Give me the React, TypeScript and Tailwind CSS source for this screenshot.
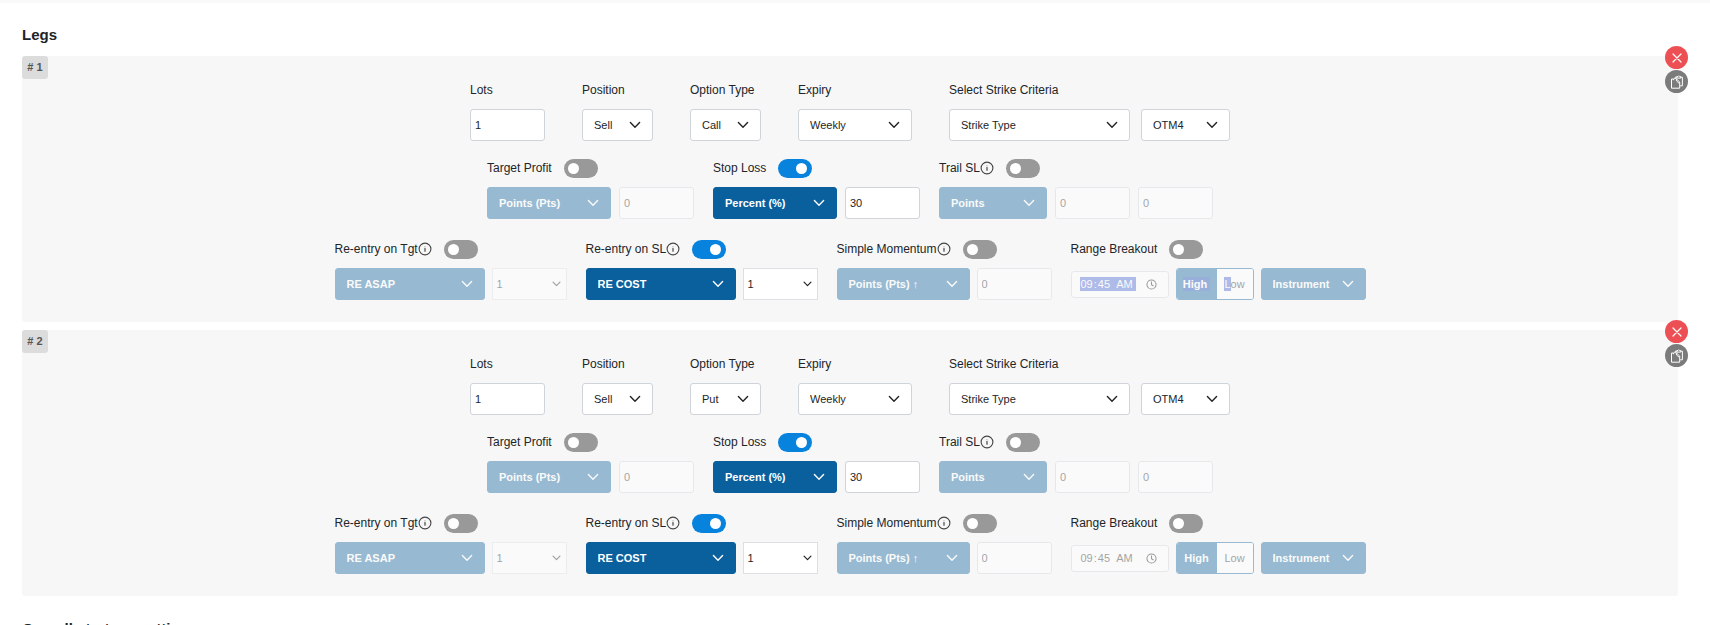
import { useId, useState } from "react";
import type { ReactNode } from "react";

type Toggles = {
  target: boolean;
  stopLoss: boolean;
  trail: boolean;
  reTarget: boolean;
  reStop: boolean;
  momentum: boolean;
  range: boolean;
};

function Chevron({ small = false }: { small?: boolean }) {
  return (
    <svg
      viewBox="0 0 12 8"
      className={small ? "h-[6px] w-[9px]" : "h-[8px] w-[12px]"}
      fill="none"
      stroke="currentColor"
      strokeWidth={small ? 1.6 : 1.4}
      strokeLinecap="round"
      strokeLinejoin="round"
      aria-hidden="true"
    >
      <path d="M1.4 1.6 6 6.2l4.6-4.6" />
    </svg>
  );
}

function InfoIcon() {
  return (
    <svg viewBox="0 0 14 14" className="size-[14px] shrink-0 text-[#444]" fill="none" stroke="currentColor" aria-hidden="true">
      <circle cx="7" cy="7" r="5.9" strokeWidth="1.1" />
      <path d="M7 6.5v2.7" strokeWidth="1.2" strokeLinecap="round" />
      <circle cx="7" cy="4.9" r="0.2" strokeWidth="0.5" />
    </svg>
  );
}

type SelectProps = {
  label: string;
  options: string[];
  width: string;
  id?: string;
  tone?: "plain" | "primary" | "compact";
  disabled?: boolean;
};

const selectTones = {
  plain: "rounded-[3px] border border-[#ced4da] bg-white pl-[11px] text-[#212529]",
  primary: "rounded-[3px] border border-[#0a609d] bg-[#0a609d] pl-[11px] font-bold text-white",
  compact: "border border-[#dcdfe3] bg-white pl-[4px] text-[#212529]",
};

const chevronTones = {
  plain: "mr-[12px] text-[#222]",
  primary: "mr-[12px] text-white",
  compact: "mr-[6px] text-[#222]",
};

function Select({ label, options, width, id, tone = "plain", disabled = false }: SelectProps) {
  return (
    <div className={`grid h-8 items-center ${width} ${disabled ? "opacity-40" : ""}`}>
      <select
        id={id}
        aria-label={id ? undefined : label}
        disabled={disabled}
        className={`col-start-1 row-start-1 h-8 w-full appearance-none text-[11px] opacity-100 ${selectTones[tone]}`}
      >
        {options.map((o) => (
          <option key={o}>{o}</option>
        ))}
      </select>
      <span className={`pointer-events-none col-start-1 row-start-1 justify-self-end ${chevronTones[tone]}`}>
        <Chevron small={tone === "compact"} />
      </span>
    </div>
  );
}

function NumberBox({ label, value, id, disabled = false }: { label: string; value: string; id?: string; disabled?: boolean }) {
  return (
    <input
      id={id}
      aria-label={id ? undefined : label}
      type="text"
      inputMode="numeric"
      defaultValue={value}
      disabled={disabled}
      className="h-8 w-[75px] rounded-[3px] border border-[#ced4da] bg-white px-[4px] text-[11px] text-[#212529] disabled:opacity-40"
    />
  );
}

function Field({ label, children }: { label: string; children: (id: string) => ReactNode }) {
  const id = useId();
  return (
    <div className="flex flex-col gap-[9px]">
      <label htmlFor={id} className="text-[12px] leading-5">
        {label}
      </label>
      <div className="flex gap-[11px]">{children(id)}</div>
    </div>
  );
}

type GroupProps = {
  label: string;
  info?: boolean;
  wide?: boolean;
  on: boolean;
  onToggle: () => void;
  children: ReactNode;
};

function ToggleGroup({ label, info = false, wide = false, on, onToggle, children }: GroupProps) {
  return (
    <div className="flex flex-col gap-[9px]">
      <label className="flex h-5 items-center gap-3 text-[12px] leading-5">
        <span className="flex items-center">
          {label}
          {info && <InfoIcon />}
        </span>
        <input
          type="checkbox"
          role="switch"
          checked={on}
          onChange={onToggle}
          className="h-[19px] w-[34px] appearance-none rounded-full bg-[#999] before:m-[4px] before:block before:size-[11px] before:rounded-full before:bg-white checked:bg-[#0783dd] checked:before:ml-[18px]"
        />
      </label>
      <div className={`flex items-center ${wide ? "gap-[8px]" : "gap-[7px]"}`}>{children}</div>
    </div>
  );
}

const timeHighlight =
  "[&::-webkit-datetime-edit-hour-field]:bg-[#4361d1] [&::-webkit-datetime-edit-minute-field]:bg-[#4361d1] [&::-webkit-datetime-edit-ampm-field]:bg-[#4361d1] [&::-webkit-datetime-edit-text]:bg-[#4361d1] [&::-webkit-datetime-edit-hour-field]:text-white [&::-webkit-datetime-edit-minute-field]:text-white [&::-webkit-datetime-edit-ampm-field]:text-white [&::-webkit-datetime-edit-text]:text-white";

const timePlain =
  "[&::-webkit-datetime-edit-hour-field]:text-[#212529] [&::-webkit-datetime-edit-minute-field]:text-[#212529] [&::-webkit-datetime-edit-ampm-field]:text-[#212529]";

function TimeBox({ disabled, highlighted }: { disabled: boolean; highlighted: boolean }) {
  return (
    <div
      className={`flex h-[27px] w-[98px] items-center justify-between rounded-[3px] border border-[#ced4da] bg-white pl-[8px] pr-[11px] ${disabled ? "opacity-40" : ""}`}
    >
      <input
        type="time"
        aria-label="Range breakout time"
        defaultValue="09:45"
        disabled={disabled}
        className={`h-[17px] w-[62px] text-[11px] text-[#212529] [&::-webkit-calendar-picker-indicator]:hidden [&::-webkit-datetime-edit]:p-0 [&::-webkit-datetime-edit-fields-wrapper]:p-0 [&::-webkit-datetime-edit-hour-field]:p-px [&::-webkit-datetime-edit-minute-field]:p-px [&::-webkit-datetime-edit-text]:py-px [&::-webkit-datetime-edit-ampm-field]:px-[3px] [&::-webkit-datetime-edit-ampm-field]:py-px ${highlighted ? timeHighlight : timePlain}`}
      />
      <svg viewBox="0 0 12 12" className="size-[11px] shrink-0" fill="none" stroke="#111" strokeWidth="1.1" aria-hidden="true">
        <circle cx="6" cy="6" r="5" />
        <path d="M6 2.8v3.4l2.2 1.4" />
      </svg>
    </div>
  );
}

function Leg({ index, optionType, highlighted = false }: { index: number; optionType: string; highlighted?: boolean }) {
  const [on, setOn] = useState<Toggles>({
    target: false,
    stopLoss: true,
    trail: false,
    reTarget: false,
    reStop: true,
    momentum: false,
    range: false,
  });
  const group = (key: keyof Toggles) => ({
    on: on[key],
    onToggle: () => setOn((prev) => ({ ...prev, [key]: !prev[key] })),
  });

  return (
    <section aria-label={`Leg ${index}`} className="relative rounded-[3px] bg-[#f7f7f7] pt-6 pb-[22px]">
      <span className="absolute top-0 left-0 w-[26px] rounded-[3px] bg-[#dcdcdc] text-center text-[11px] leading-[23px] font-bold text-[#555]">
        # {index}
      </span>
      <div className="absolute -top-[10px] -right-[10px] flex flex-col gap-px">
        <button type="button" aria-label="Remove leg" className="grid size-[23px] place-items-center rounded-full bg-[#ed5054]">
          <svg viewBox="0 0 10 10" className="size-[10px]" stroke="#fff" strokeWidth="1.2" strokeLinecap="round" aria-hidden="true">
            <path d="M1 1l8 8M9 1 1 9" />
          </svg>
        </button>
        <button type="button" aria-label="Copy leg" className="grid size-[23px] place-items-center rounded-full bg-[#7b7b7b]">
          <svg viewBox="0 0 14 14" className="size-[14px]" fill="none" stroke="#fff" strokeWidth="1" strokeLinejoin="round" aria-hidden="true">
            <path d="M5.2 3.6V2.2h1.6M10.8 2.2h1.6v8.6H10.2" />
            <path d="M6.8 3.1V1.6h1.2l.8-.9.8.9h1.2v1.5z" />
            <path d="M3.4 4H1.5v9.2h8.2V7" />
            <path d="M3.4 5.2V4h1l1-1 1 1 3.3 3" />
            <path d="M6.4 4v1.8L9 8.2" />
          </svg>
        </button>
      </div>

      <div className="flex justify-center gap-[37px]">
        <Field label="Lots">{(id) => <NumberBox id={id} label="Lots" value="1" />}</Field>
        <Field label="Position">{(id) => <Select id={id} label="Position" options={["Sell", "Buy"]} width="w-[71px]" />}</Field>
        <Field label="Option Type">
          {(id) => (
            <Select id={id} label="Option Type" options={optionType === "Call" ? ["Call", "Put"] : ["Put", "Call"]} width="w-[71px]" />
          )}
        </Field>
        <Field label="Expiry">{(id) => <Select id={id} label="Expiry" options={["Weekly", "Monthly"]} width="w-[114px]" />}</Field>
        <Field label="Select Strike Criteria">
          {(id) => (
            <>
              <Select id={id} label="Strike criteria" options={["Strike Type", "Premium"]} width="w-[181px]" />
              <Select label="Strike" options={["OTM4", "ATM"]} width="w-[89px]" />
            </>
          )}
        </Field>
      </div>

      <div className="mt-[17px] flex justify-center gap-[19px]">
        <ToggleGroup label="Target Profit" wide {...group("target")}>
          <Select tone="primary" label="Target unit" options={["Points (Pts)", "Percent (%)"]} width="w-[124px]" disabled={!on.target} />
          <NumberBox label="Target value" value="0" disabled={!on.target} />
        </ToggleGroup>
        <ToggleGroup label="Stop Loss" wide {...group("stopLoss")}>
          <Select tone="primary" label="Stop loss unit" options={["Percent (%)", "Points (Pts)"]} width="w-[124px]" disabled={!on.stopLoss} />
          <NumberBox label="Stop loss value" value="30" disabled={!on.stopLoss} />
        </ToggleGroup>
        <ToggleGroup label="Trail SL" wide info {...group("trail")}>
          <Select tone="primary" label="Trail unit" options={["Points", "Percent"]} width="w-[108px]" disabled={!on.trail} />
          <NumberBox label="Trail step" value="0" disabled={!on.trail} />
          <NumberBox label="Trail amount" value="0" disabled={!on.trail} />
        </ToggleGroup>
      </div>

      <div className="mt-5 flex justify-center gap-[19px]">
        <ToggleGroup label="Re-entry on Tgt" info {...group("reTarget")}>
          <Select tone="primary" label="Target re-entry mode" options={["RE ASAP", "RE COST"]} width="w-[150px]" disabled={!on.reTarget} />
          <Select tone="compact" label="Target re-entries" options={["1", "2", "3"]} width="w-[75px]" disabled={!on.reTarget} />
        </ToggleGroup>
        <ToggleGroup label="Re-entry on SL" info {...group("reStop")}>
          <Select tone="primary" label="Stop loss re-entry mode" options={["RE COST", "RE ASAP"]} width="w-[150px]" disabled={!on.reStop} />
          <Select tone="compact" label="Stop loss re-entries" options={["1", "2", "3"]} width="w-[75px]" disabled={!on.reStop} />
        </ToggleGroup>
        <ToggleGroup label="Simple Momentum" info {...group("momentum")}>
          <Select tone="primary" label="Momentum unit" options={["Points (Pts) ↑", "Points (Pts) ↓"]} width="w-[133px]" disabled={!on.momentum} />
          <NumberBox label="Momentum value" value="0" disabled={!on.momentum} />
        </ToggleGroup>
        <ToggleGroup label="Range Breakout" {...group("range")}>
          <TimeBox disabled={!on.range} highlighted={highlighted} />
          <div
            className={`flex h-8 w-[78px] overflow-hidden rounded-[3px] border border-[#0a609d] text-[11px] ${on.range ? "" : "opacity-40"}`}
          >
            <button type="button" aria-pressed="true" disabled={!on.range} className="w-10 bg-[#0a609d] font-bold text-white">
              <span className={highlighted ? "bg-[#0d45b4] py-px pr-[3px]" : ""}>High</span>
            </button>
            <button type="button" aria-pressed="false" disabled={!on.range} className="flex-1 bg-white text-[#212529]">
              {highlighted ? (
                <>
                  <span className="bg-[#4361d1] py-px text-white">L</span>ow
                </>
              ) : (
                "Low"
              )}
            </button>
          </div>
          <Select tone="primary" label="Breakout source" options={["Instrument", "Underlying"]} width="w-[105px]" disabled={!on.range} />
        </ToggleGroup>
      </div>
    </section>
  );
}

export default function App() {
  return (
    <div className="h-screen overflow-y-auto bg-[#f9f9f9] pt-[3px] font-['Liberation_Sans',Arial,sans-serif] text-[#212529] [scrollbar-width:none]">
      <main className="bg-white pt-5 pr-8 pb-8 pl-[22px]">
        <h2 className="text-[15px] leading-6 font-bold">Legs</h2>
        <div className="mt-[9px] flex flex-col gap-2">
          <Leg index={1} optionType="Call" highlighted />
          <Leg index={2} optionType="Put" />
        </div>
        <h2 className="mt-[21px] text-[15px] leading-6 font-bold">Overall strategy settings</h2>
      </main>
    </div>
  );
}
